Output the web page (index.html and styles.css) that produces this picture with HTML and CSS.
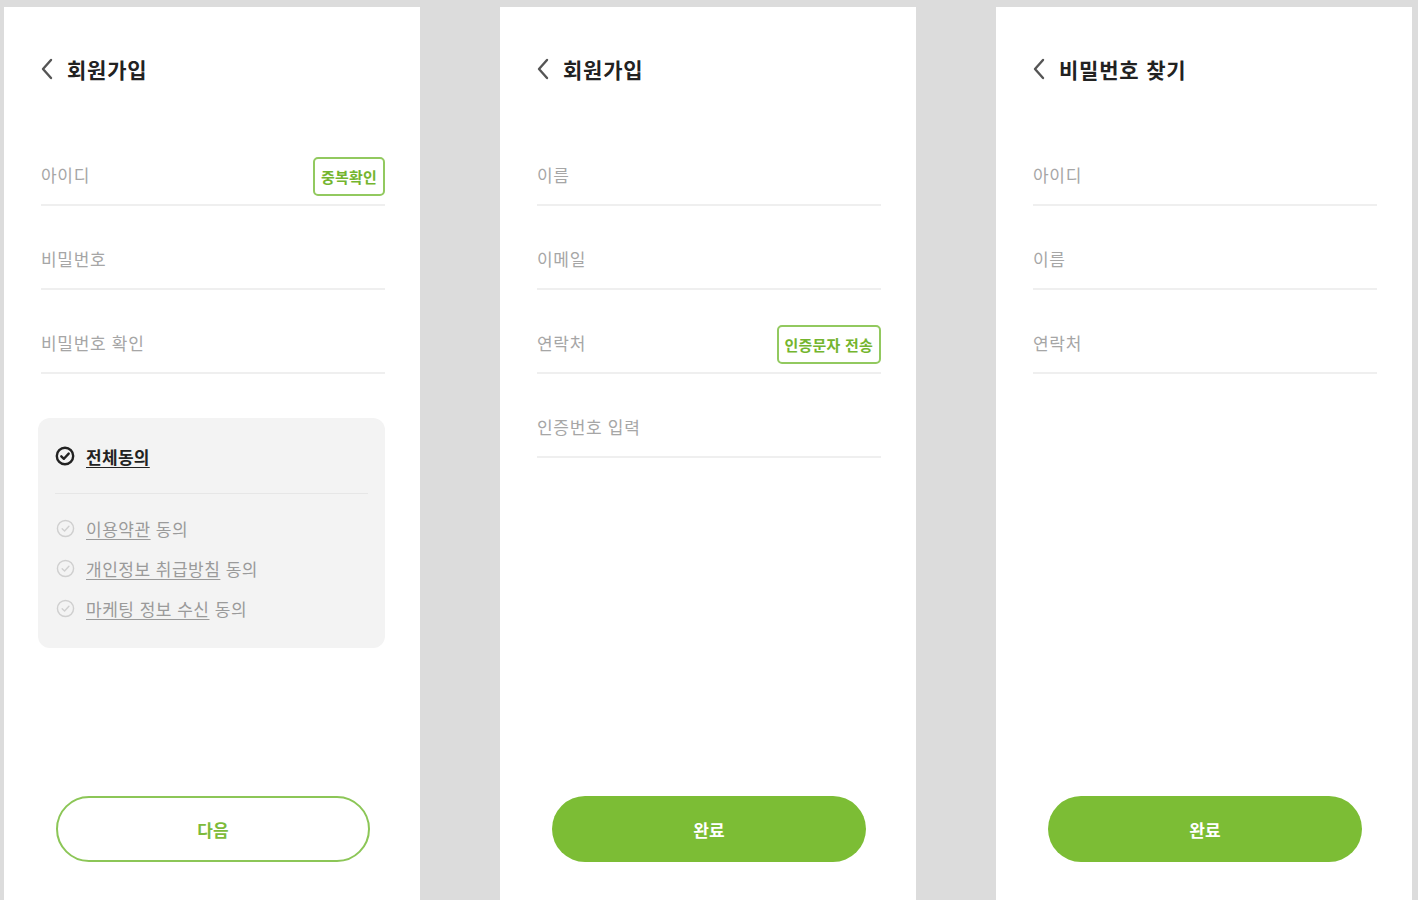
FILE: index.html
```html
<!DOCTYPE html>
<html lang="ko">
<head>
<meta charset="utf-8">
<title>회원가입</title>
<link rel="stylesheet" href="styles.css">
</head>
<body>
<div class="screens">
  <section class="panel">
    <header class="head">
      <svg class="back" width="14" height="22" viewBox="0 0 14 22"><path d="M11 2 L3 11 L11 20" fill="none" stroke="#555" stroke-width="2.4" stroke-linecap="round" stroke-linejoin="round"/></svg>
      <h1 class="title">회원가입</h1>
    </header>
    <div class="fields">
      <div class="field"><span class="ph">아이디</span><button class="chip">중복확인</button></div>
      <div class="field"><span class="ph">비밀번호</span></div>
      <div class="field"><span class="ph">비밀번호 확인</span></div>
    </div>
    <div class="terms">
      <div class="all">
        <svg class="chk" width="20" height="20" viewBox="0 0 20 20"><circle cx="10" cy="10" r="8.2" fill="none" stroke="#222" stroke-width="2.4"/><path d="M6.3 10.3 L8.9 12.8 L13.7 7.6" fill="none" stroke="#222" stroke-width="2.4" stroke-linecap="round" stroke-linejoin="round"/></svg>
        <span class="all-text">전체동의</span>
      </div>
      <div class="divider"></div>
      <ul class="items">
        <li class="item"><svg class="chk-s" width="19" height="19" viewBox="0 0 20 20"><circle cx="10" cy="10" r="8.5" fill="none" stroke="#cfcfcf" stroke-width="1.5"/><path d="M6.5 10.3 L9 12.6 L13.6 7.7" fill="none" stroke="#cfcfcf" stroke-width="1.5" stroke-linecap="round" stroke-linejoin="round"/></svg><span><u>이용약관</u> 동의</span></li>
        <li class="item"><svg class="chk-s" width="19" height="19" viewBox="0 0 20 20"><circle cx="10" cy="10" r="8.5" fill="none" stroke="#cfcfcf" stroke-width="1.5"/><path d="M6.5 10.3 L9 12.6 L13.6 7.7" fill="none" stroke="#cfcfcf" stroke-width="1.5" stroke-linecap="round" stroke-linejoin="round"/></svg><span><u>개인정보 취급방침</u> 동의</span></li>
        <li class="item"><svg class="chk-s" width="19" height="19" viewBox="0 0 20 20"><circle cx="10" cy="10" r="8.5" fill="none" stroke="#cfcfcf" stroke-width="1.5"/><path d="M6.5 10.3 L9 12.6 L13.6 7.7" fill="none" stroke="#cfcfcf" stroke-width="1.5" stroke-linecap="round" stroke-linejoin="round"/></svg><span><u>마케팅 정보 수신</u> 동의</span></li>
      </ul>
    </div>
    <button class="cta outline">다음</button>
  </section>

  <section class="panel">
    <header class="head">
      <svg class="back" width="14" height="22" viewBox="0 0 14 22"><path d="M11 2 L3 11 L11 20" fill="none" stroke="#555" stroke-width="2.4" stroke-linecap="round" stroke-linejoin="round"/></svg>
      <h1 class="title">회원가입</h1>
    </header>
    <div class="fields">
      <div class="field"><span class="ph">이름</span></div>
      <div class="field"><span class="ph">이메일</span></div>
      <div class="field"><span class="ph">연락처</span><button class="chip">인증문자 전송</button></div>
      <div class="field"><span class="ph">인증번호 입력</span></div>
    </div>
    <button class="cta filled">완료</button>
  </section>

  <section class="panel">
    <header class="head">
      <svg class="back" width="14" height="22" viewBox="0 0 14 22"><path d="M11 2 L3 11 L11 20" fill="none" stroke="#555" stroke-width="2.4" stroke-linecap="round" stroke-linejoin="round"/></svg>
      <h1 class="title">비밀번호 찾기</h1>
    </header>
    <div class="fields">
      <div class="field"><span class="ph">아이디</span></div>
      <div class="field"><span class="ph">이름</span></div>
      <div class="field"><span class="ph">연락처</span></div>
    </div>
    <button class="cta filled">완료</button>
  </section>
</div>
</body>
</html>
```
FILE: styles.css
```css
* { box-sizing: border-box; }
html, body { margin: 0; padding: 0; }
body {
  background: #dcdcdc;
  font-family: "Noto Sans CJK KR", "Noto Sans", sans-serif;
  height: 100vh;
  overflow: hidden;
}
.screens {
  display: flex;
  gap: 80px;
  padding: 7px 0 0 4px;
  height: 100vh;
}
.panel {
  width: 416px;
  height: 100%;
  background: #fff;
  display: flex;
  flex-direction: column;
  padding: 48px 35px 38px 37px;
}
.head {
  display: flex;
  align-items: center;
  height: 28px;
  margin-left: -1px;
}
.back { display: block; }
.title {
  margin: 0 0 0 13px;
  font-size: 21px;
  font-weight: 700;
  color: #222;
  line-height: 28px;
  letter-spacing: 0.8px;
}
.fields {
  display: flex;
  flex-direction: column;
  gap: 35px;
  padding-top: 74px;
}
.field {
  height: 49px;
  display: flex;
  align-items: center;
  justify-content: space-between;
  padding-bottom: 8px;
  border-bottom: 2px solid #efefef;
}
.ph {
  font-size: 17px;
  color: #a6a6a6;
  line-height: 24px;
  letter-spacing: 0.7px;
  margin-top: -3px;
}
.chip {
  height: 39px;
  padding: 0 6px;
  border: 2px solid #92c95f;
  border-radius: 5px;
  background: #fff;
  color: #74b52e;
  font-family: inherit;
  font-size: 15px;
  font-weight: 700;
  letter-spacing: 0.2px;
}
.terms {
  margin: 44px 0 0 -3px;
  height: 230px;
  background: #f3f3f3;
  border-radius: 12px;
  padding: 24px 17px 0;
}
.all {
  display: flex;
  align-items: center;
  height: 28px;
  gap: 11px;
}
.chk { display: block; }
.all-text {
  font-size: 17px;
  font-weight: 700;
  color: #222;
  text-decoration: underline;
  text-underline-offset: 3px;
  letter-spacing: 0.3px;
}
.divider {
  margin-top: 23px;
  height: 1px;
  background: #e6e6e6;
}
.items {
  list-style: none;
  margin: 14px 0 0;
  padding: 0;
}
.item {
  display: flex;
  align-items: center;
  gap: 11px;
  height: 40px;
  font-size: 17px;
  color: #9a9a9a;
  letter-spacing: 0.5px;
}
.item u { text-underline-offset: 3px; }
.chk-s { display: block; margin-left: 1px; }
.cta {
  margin-top: auto;
  align-self: flex-start;
  width: 314px;
  height: 66px;
  margin-left: 15px;
  border-radius: 33px;
  font-family: inherit;
  font-size: 17px;
  font-weight: 700;
}
.cta.outline {
  background: #fff;
  border: 2px solid #8cc657;
  color: #7dbb3a;
}
.cta.filled {
  background: #7cbd35;
  border: none;
  color: #fff;
}
```
